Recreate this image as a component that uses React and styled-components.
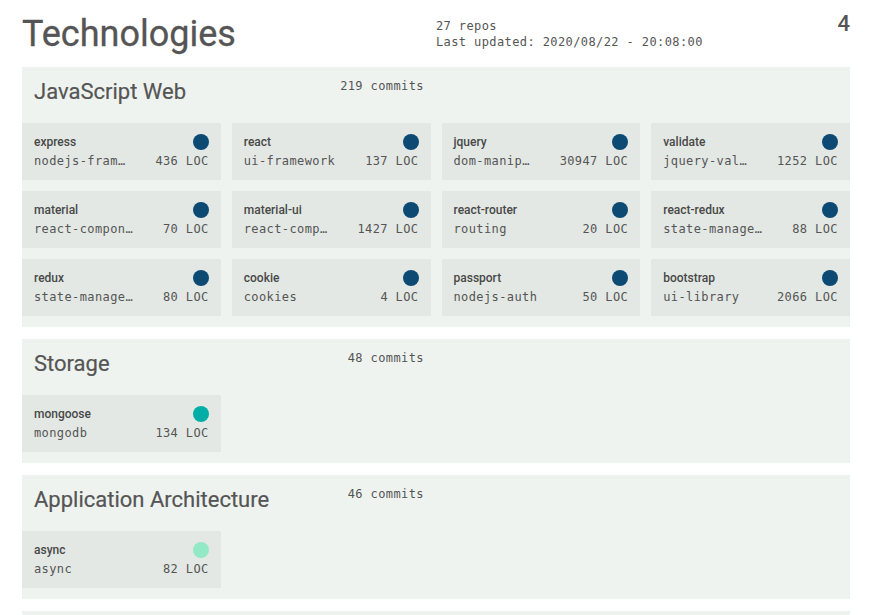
import React from "react";
import styled, { createGlobalStyle } from "styled-components";

const GlobalStyle = createGlobalStyle`
  body {
    margin: 0;
    background: #ffffff;
    font-family: Roboto, "Liberation Sans", sans-serif;
    color: #555555;
  }
`;

const NAVY = "#0c4a74";
const TEAL = "#00aea5";
const MINT = "#93e9c6";

const sections = [
  {
    title: "JavaScript Web",
    commits: 219,
    techs: [
      { name: "express", tag: "nodejs-framework", loc: 436, color: NAVY },
      { name: "react", tag: "ui-framework", loc: 137, color: NAVY },
      { name: "jquery", tag: "dom-manipulation", loc: 30947, color: NAVY },
      { name: "validate", tag: "jquery-validation", loc: 1252, color: NAVY },
      { name: "material", tag: "react-components", loc: 70, color: NAVY },
      { name: "material-ui", tag: "react-components", loc: 1427, color: NAVY },
      { name: "react-router", tag: "routing", loc: 20, color: NAVY },
      { name: "react-redux", tag: "state-management", loc: 88, color: NAVY },
      { name: "redux", tag: "state-management", loc: 80, color: NAVY },
      { name: "cookie", tag: "cookies", loc: 4, color: NAVY },
      { name: "passport", tag: "nodejs-auth", loc: 50, color: NAVY },
      { name: "bootstrap", tag: "ui-library", loc: 2066, color: NAVY },
    ],
  },
  {
    title: "Storage",
    commits: 48,
    techs: [{ name: "mongoose", tag: "mongodb", loc: 134, color: TEAL }],
  },
  {
    title: "Application Architecture",
    commits: 46,
    techs: [{ name: "async", tag: "async", loc: 82, color: MINT }],
  },
];

function App() {
  return (
    <>
      <GlobalStyle />
      <Page>
        <Header>
          <PageTitle>Technologies</PageTitle>
          <Meta>
            <div>27 repos</div>
            <div>Last updated: 2020/08/22 - 20:08:00</div>
          </Meta>
          <Count>4</Count>
        </Header>

        {sections.map((s) => (
          <Section key={s.title}>
            <SectionHead>
              <SectionTitle>{s.title}</SectionTitle>
              <Commits>{s.commits} commits</Commits>
            </SectionHead>
            <Grid>
              {s.techs.map((t) => (
                <Card key={t.name}>
                  <CardTop>
                    <Name>{t.name}</Name>
                    <Dot $color={t.color} />
                  </CardTop>
                  <CardBottom>
                    <Tag>{t.tag}</Tag>
                    <Loc>{t.loc} LOC</Loc>
                  </CardBottom>
                </Card>
              ))}
            </Grid>
          </Section>
        ))}

        <Section>
          <SectionHead />
        </Section>
      </Page>
    </>
  );
}

const mono = `
  font-family: "DejaVu Sans Mono", "Liberation Mono", monospace;
  font-size: 12px;
  letter-spacing: 0.4px;
  line-height: 16px;
`;

const Page = styled.div`
  padding: 0 21px 0 22px;
  display: flex;
  flex-direction: column;
  gap: 12px;
`;

const Header = styled.header`
  display: flex;
  align-items: flex-start;
  height: 55px;
`;

const PageTitle = styled.h1`
  margin: 12px 0 0;
  width: 414px;
  font-size: 36px;
  font-weight: 400;
  line-height: 44px;
  color: #555555;
  -webkit-text-stroke: 0.3px #555555;
`;

const Meta = styled.div`
  ${mono}
  margin-top: 18px;
  color: #555555;
  flex: 1;
`;

const Count = styled.div`
  margin-top: 11px;
  font-size: 22px;
  font-weight: 500;
  line-height: 26px;
  color: #555555;
`;

const Section = styled.section`
  background: #eff3f0;
  padding-bottom: 11px;
`;

const SectionHead = styled.div`
  display: grid;
  grid-template-columns: 280px 110px;
  align-items: start;
  height: 46px;
  padding: 10px 12px 0;
`;

const SectionTitle = styled.h2`
  margin: 2px 0 0;
  font-size: 22px;
  font-weight: 400;
  line-height: 26px;
  color: #555555;
  white-space: nowrap;
  -webkit-text-stroke: 0.2px #555555;
`;

const Commits = styled.div`
  ${mono}
  justify-self: end;
  margin-top: 1px;
  color: #555555;
`;

const Grid = styled.div`
  display: grid;
  grid-template-columns: repeat(4, 1fr);
  gap: 11px;
`;

const Card = styled.div`
  background: #e3e8e4;
  padding: 11px 12px 11px;
  display: flex;
  flex-direction: column;
  gap: 3px;
  min-width: 0;
`;

const CardTop = styled.div`
  display: flex;
  align-items: center;
  justify-content: space-between;
  height: 16px;
`;

const Name = styled.div`
  font-size: 12px;
  font-weight: 500;
  line-height: 16px;
  color: #484848;
`;

const Dot = styled.span`
  width: 16px;
  height: 16px;
  border-radius: 50%;
  background: ${(p) => p.$color};
`;

const CardBottom = styled.div`
  ${mono}
  display: flex;
  justify-content: space-between;
  gap: 24px;
  color: #555555;
  min-width: 0;
`;

const Tag = styled.span`
  overflow: hidden;
  white-space: nowrap;
  text-overflow: ellipsis;
  min-width: 0;
`;

const Loc = styled.span`
  white-space: nowrap;
  flex-shrink: 0;
`;

export default App;
